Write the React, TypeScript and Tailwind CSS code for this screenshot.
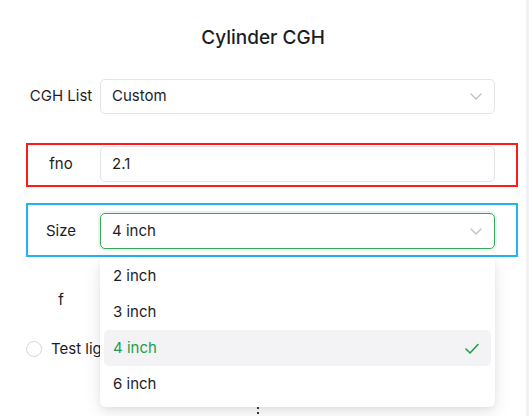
import React from "react";

const Chevron = () => (
  <svg width="12" height="7" viewBox="0 0 12 7" fill="none">
    <path d="M1 1L6 6L11 1" stroke="#bdbdc2" strokeWidth="1.2" strokeLinecap="round" strokeLinejoin="round" />
  </svg>
);

const Check = () => (
  <svg width="14" height="11" viewBox="0 0 14 11" fill="none">
    <path d="M1 6L5 10L13 1.5" stroke="#1f9d4c" strokeWidth="1.6" strokeLinecap="round" strokeLinejoin="round" />
  </svg>
);

export default function App() {
  const items = ["2 inch", "3 inch", "4 inch", "6 inch"];
  return (
    <div
      className="flex h-[416px] w-[529px] overflow-hidden bg-white text-[#1d1d1f]"
      style={{ fontFamily: "Inter, 'Noto Sans', sans-serif" }}
    >
      <div className="relative w-[526px] h-full bg-white">
        <div className="pt-[26px] h-[50px] text-center text-[19px] leading-[24px] font-medium">
          Cylinder CGH
        </div>

        {/* CGH List */}
        <div className="mt-[27px] ml-[26px] w-[492px] flex items-center border-2 border-transparent">
          <div className="w-[66px] text-center text-[15px]">CGH List</div>
          <div className="ml-[6px] w-[395px] h-[35px] rounded-[5px] border border-[#e3e3e8] flex items-center justify-between pl-[11px] pr-[12px] text-[15px]">
            <span>Custom</span>
            <Chevron />
          </div>
        </div>

        {/* fno */}
        <div className="mt-[27px] ml-[26px] w-[492px] flex items-center border-2 border-[#ff1a1a] pt-[1px] pb-[3px]">
          <div className="w-[66px] text-center text-[15px]">fno</div>
          <div className="ml-[6px] w-[395px] h-[36px] rounded-[5px] border border-[#e3e3e8] flex items-center pl-[11px] text-[15px]">
            2.1
          </div>
        </div>

        {/* Size */}
        <div className="mt-[16px] ml-[26px] w-[492px] flex items-center border-2 border-[#22b3f2] pt-[8px] pb-[6px]">
          <div className="w-[66px] text-center text-[15px]">Size</div>
          <div className="ml-[6px] w-[395px] h-[36px] rounded-[5px] border border-[#3aa55e] shadow-[0_0_0_2px_rgba(58,165,94,0.12)] flex items-center justify-between pl-[11px] pr-[12px] text-[15px]">
            <span>4 inch</span>
            <Chevron />
          </div>
        </div>

        {/* f row */}
        <div className="mt-[23px] ml-[26px] w-[492px] flex items-center border-2 border-transparent">
          <div className="w-[66px] text-center text-[15px]">f</div>
          <div className="ml-[6px] w-[395px] h-[36px] rounded-[5px] border border-[#e3e3e8]" />
        </div>

        {/* radio row */}
        <div className="mt-[18px] ml-[26px] flex items-center gap-[9px]">
          <div className="w-[16px] h-[16px] rounded-full border border-[#d6d6dc] bg-white" />
          <span className="text-[15px]">Test light</span>
        </div>

        {/* Dropdown */}
        <div className="absolute left-[100px] top-[257px] w-[395px] h-[150px] rounded-[6px] bg-white shadow-[0_6px_18px_rgba(0,0,0,0.09),0_2px_6px_rgba(0,0,0,0.06)] pt-[1px] px-[4px]">
          {items.map((it) => {
            const sel = it === "4 inch";
            return (
              <div
                key={it}
                className={
                  sel
                    ? "h-[36px] rounded-[5px] bg-[#f3f3f6] flex items-center justify-between pl-[9px] pr-[12px] text-[15px] text-[#1f9d4c]"
                    : "h-[36px] rounded-[5px] flex items-center pl-[9px] pr-[12px] text-[15px]"
                }
              >
                <span>{it}</span>
                {sel && <Check />}
              </div>
            );
          })}
        </div>

        {/* small handle dots */}
        <div className="absolute left-[257px] top-[407px] flex flex-col gap-[3px]">
          <div className="w-[2px] h-[2px] bg-[#333]" />
          <div className="w-[2px] h-[2px] bg-[#333]" />
        </div>
      </div>
      <div className="flex-1 h-full bg-[#f1f1f6]" />
    </div>
  );
}
